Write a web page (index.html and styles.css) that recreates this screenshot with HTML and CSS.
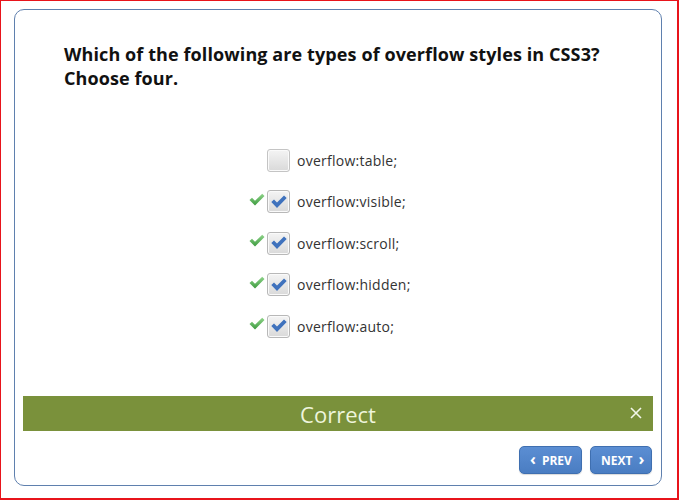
FILE: index.html
```html
<!DOCTYPE html>
<html>
<head>
<meta charset="utf-8">
<link rel="stylesheet" href="styles.css">
</head>
<body>
<div class="frame">
  <div class="card">
    <h1 class="question">Which of the following are types of overflow styles in CSS3?<br>Choose four.</h1>
    <ul class="options">
      <li class="option">
        <span class="mark"></span>
        <span class="box"></span>
        <span class="label">overflow:table;</span>
      </li>
      <li class="option">
        <span class="mark"><svg viewBox="0 0 16 14" width="16" height="14"><defs><linearGradient id="g1" x1="0" y1="0" x2="0" y2="1"><stop offset="0" stop-color="#8fd48a"/><stop offset="1" stop-color="#3c9a3e"/></linearGradient></defs><path d="M0.5 7 L3 4.8 L6 7.8 L13.2 0.8 L15.5 3 L6 12.6 Z" fill="url(#g1)"/></svg></span>
        <span class="box checked"><svg viewBox="0 0 16 14" width="16" height="14"><path d="M0.3 7 L3 4.5 L6 7.5 L13 0.5 L15.7 3 L6 13 Z" fill="#3f72bd"/></svg></span>
        <span class="label">overflow:visible;</span>
      </li>
      <li class="option">
        <span class="mark"><svg viewBox="0 0 16 14" width="16" height="14"><path d="M0.5 7 L3 4.8 L6 7.8 L13.2 0.8 L15.5 3 L6 12.6 Z" fill="url(#g1)"/></svg></span>
        <span class="box checked"><svg viewBox="0 0 16 14" width="16" height="14"><path d="M0.3 7 L3 4.5 L6 7.5 L13 0.5 L15.7 3 L6 13 Z" fill="#3f72bd"/></svg></span>
        <span class="label">overflow:scroll;</span>
      </li>
      <li class="option">
        <span class="mark"><svg viewBox="0 0 16 14" width="16" height="14"><path d="M0.5 7 L3 4.8 L6 7.8 L13.2 0.8 L15.5 3 L6 12.6 Z" fill="url(#g1)"/></svg></span>
        <span class="box checked"><svg viewBox="0 0 16 14" width="16" height="14"><path d="M0.3 7 L3 4.5 L6 7.5 L13 0.5 L15.7 3 L6 13 Z" fill="#3f72bd"/></svg></span>
        <span class="label">overflow:hidden;</span>
      </li>
      <li class="option">
        <span class="mark"><svg viewBox="0 0 16 14" width="16" height="14"><path d="M0.5 7 L3 4.8 L6 7.8 L13.2 0.8 L15.5 3 L6 12.6 Z" fill="url(#g1)"/></svg></span>
        <span class="box checked"><svg viewBox="0 0 16 14" width="16" height="14"><path d="M0.3 7 L3 4.5 L6 7.5 L13 0.5 L15.7 3 L6 13 Z" fill="#3f72bd"/></svg></span>
        <span class="label">overflow:auto;</span>
      </li>
    </ul>
    <div class="feedback">
      <span class="feedback-text">Correct</span>
      <span class="close"><svg viewBox="0 0 12 12" width="12" height="12"><path d="M1 1 L11 11 M11 1 L1 11" stroke="#f2f6e8" stroke-width="1.6" fill="none"/></svg></span>
    </div>
    <div class="nav">
      <button class="btn"><span class="chev">‹</span>PREV</button>
      <button class="btn">NEXT<span class="chev right">›</span></button>
    </div>
  </div>
</div>
</body>
</html>
```
FILE: styles.css
```css
html, body {
  margin: 0;
  padding: 0;
  background: #fff;
}
.frame {
  width: 679px;
  height: 500px;
  box-sizing: border-box;
  border-style: solid;
  border-color: #e8141b;
  border-width: 1px 2px 2px 1px;
  padding: 8px 0 0 13px;
  font-family: "Open Sans", sans-serif;
}
.card {
  width: 648px;
  height: 477px;
  box-sizing: border-box;
  border: 1px solid #5f80ae;
  border-radius: 10px;
  padding: 32px 8px 0 8px;
  display: flex;
  flex-direction: column;
}
.question {
  margin: 0 0 0 41px;
  font-size: 18px;
  line-height: 24px;
  font-weight: 700;
  letter-spacing: 0.1px;
  color: #111;
}
.options {
  list-style: none;
  margin: 58px 0 0 226px;
  padding: 0;
  display: flex;
  flex-direction: column;
  gap: 17.5px;
}
.option {
  display: flex;
  align-items: center;
  height: 24px;
}
.mark {
  width: 16px;
  height: 14px;
  margin-right: 2px;
  margin-top: -4px;
  display: flex;
  align-items: center;
}
.box {
  width: 23px;
  height: 23px;
  box-sizing: border-box;
  border: 1px solid #c4c4c4;
  border-radius: 3px;
  box-shadow: inset 0 0 0 1px #fafafa;
  background: linear-gradient(#f4f4f4, #d9d9d9);
  display: flex;
  align-items: center;
  justify-content: center;
}
.box.checked {
  border-color: #b8b8b8;
}
.label {
  margin-left: 7px;
  font-size: 14px;
  letter-spacing: 0.25px;
  color: #333;
}
.feedback {
  margin-top: 58px;
  height: 35px;
  background: #7a913b;
  display: flex;
  align-items: center;
  justify-content: center;
  position: relative;
}
.feedback-text {
  color: #eef5dc;
  font-size: 22px;
}
.close {
  position: absolute;
  right: 11px;
  top: 11px;
  width: 12px;
  height: 12px;
  display: flex;
}
.nav {
  margin-top: 15px;
  margin-right: 1px;
  display: flex;
  justify-content: flex-end;
  gap: 8px;
}
.btn {
  height: 28px;
  box-sizing: border-box;
  padding: 0 10px;
  border: 1px solid #3f6fb0;
  border-radius: 5px;
  background: linear-gradient(#5b8ed3, #4a7dc2);
  color: #fff;
  font-family: "Open Sans", sans-serif;
  font-weight: 700;
  font-size: 12px;
  display: flex;
  align-items: center;
  box-shadow: 0 1px 1px rgba(0,0,0,0.15);
}
.btn:first-child {
  width: 63px;
}
.btn:last-child {
  width: 62px;
}
.chev {
  font-size: 16px;
  line-height: 1;
  margin-right: 6px;
  margin-top: -2px;
}
.chev.right {
  margin-right: 0;
  margin-left: 6px;
}
```
